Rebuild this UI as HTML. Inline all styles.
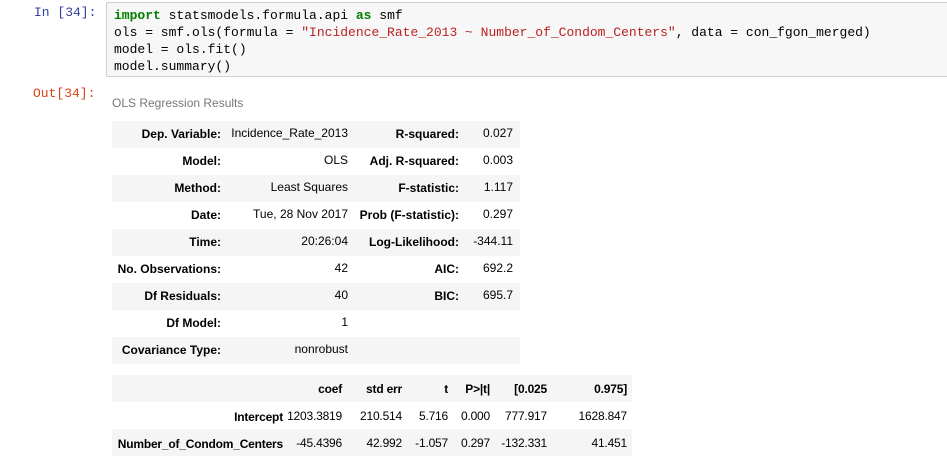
<!DOCTYPE html>
<html><head><style>
body{margin:0;background:#fff;width:947px;height:461px;overflow:hidden;position:relative;font-family:"Liberation Sans",Arial,sans-serif;}
.p{position:absolute;font-family:"Liberation Mono",monospace;font-size:13px;}
.code{position:absolute;left:106px;top:2px;width:845px;height:75px;background:#f7f7f7;border:1px solid #cfcfcf;border-radius:2px;box-sizing:border-box;}
.code pre{margin:0;position:absolute;left:7px;top:4px;font-family:"Liberation Mono",monospace;font-size:13px;line-height:17px;color:#000;}
.k{color:#008000;font-weight:bold}.s{color:#ba2121}
.cap{position:absolute;left:112px;top:96px;font-size:12px;color:#777;}
table{position:absolute;border-collapse:collapse;font-size:12px;color:#000;table-layout:fixed;}
td{height:27px;padding:0;text-align:right;white-space:nowrap;box-sizing:border-box;}
tr.g{background:#f5f5f5}
td.b{font-weight:bold;padding-bottom:2px}
td.v{padding-bottom:4px}
.t2 td{letter-spacing:-0.2px}
</style></head><body>
<div class="p" style="left:34px;top:5px;color:#303f9f">In [34]:</div>
<div class="code"><pre><span class="k">import</span> statsmodels.formula.api <span class="k">as</span> smf
ols = smf.ols(formula = <span class="s">"Incidence_Rate_2013 ~ Number_of_Condom_Centers"</span>, data = con_fgon_merged)
model = ols.fit()
model.summary()</pre></div>
<div class="p" style="left:33px;top:86px;color:#d84315">Out[34]:</div>
<div class="cap">OLS Regression Results</div>
<table style="left:112px;top:121px;width:408px">
<colgroup><col style="width:109px"><col style="width:127px"><col style="width:111px"><col style="width:61px"></colgroup>
<tr class="g"><td class="b">Dep. Variable:</td><td class="v">Incidence_Rate_2013</td><td class="b">R-squared:</td><td class="v" style="padding-right:7px">0.027</td></tr>
<tr><td class="b">Model:</td><td class="v">OLS</td><td class="b">Adj. R-squared:</td><td class="v" style="padding-right:7px">0.003</td></tr>
<tr class="g"><td class="b">Method:</td><td class="v">Least Squares</td><td class="b">F-statistic:</td><td class="v" style="padding-right:7px">1.117</td></tr>
<tr><td class="b">Date:</td><td class="v">Tue, 28 Nov 2017</td><td class="b">Prob (F-statistic):</td><td class="v" style="padding-right:7px">0.297</td></tr>
<tr class="g"><td class="b">Time:</td><td class="v">20:26:04</td><td class="b">Log-Likelihood:</td><td class="v" style="padding-right:7px">-344.11</td></tr>
<tr><td class="b">No. Observations:</td><td class="v">42</td><td class="b">AIC:</td><td class="v" style="padding-right:7px">692.2</td></tr>
<tr class="g"><td class="b">Df Residuals:</td><td class="v">40</td><td class="b">BIC:</td><td class="v" style="padding-right:7px">695.7</td></tr>
<tr><td class="b">Df Model:</td><td class="v">1</td><td></td><td></td></tr>
<tr class="g"><td class="b">Covariance Type:</td><td class="v">nonrobust</td><td></td><td></td></tr>
</table>
<table class="t2" style="left:112px;top:375px;width:520px">
<colgroup><col style="width:171px"><col style="width:59px"><col style="width:60px"><col style="width:46px"><col style="width:42px"><col style="width:57px"><col style="width:85px"></colgroup>
<tr class="g" style="font-weight:bold"><td></td><td>coef</td><td>std err</td><td>t</td><td>P&gt;|t|</td><td>[0.025</td><td style="padding-right:5px">0.975]</td></tr>
<tr><td class="b" style="padding:2px 0 0">Intercept</td><td>1203.3819</td><td>210.514</td><td>5.716</td><td>0.000</td><td>777.917</td><td style="padding-right:5px">1628.847</td></tr>
<tr class="g"><td class="b" style="padding:2px 0 0">Number_of_Condom_Centers</td><td>-45.4396</td><td>42.992</td><td>-1.057</td><td>0.297</td><td>-132.331</td><td style="padding-right:5px">41.451</td></tr>
</table>
</body></html>
